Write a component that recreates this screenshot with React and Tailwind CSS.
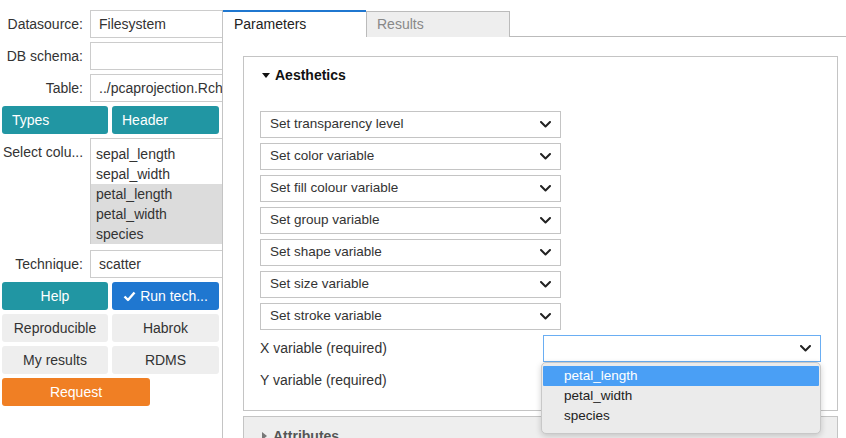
import React from 'react';

const font = { fontFamily: '"Liberation Sans", Arial, sans-serif' };

const Chevron = ({ className = '' }) => (
    <svg width="11" height="7" viewBox="0 0 11 7" className={className}>
        <polyline points="1,1 5.5,5.5 10,1" fill="none" stroke="#222" strokeWidth="2" strokeLinecap="round" strokeLinejoin="round" />
    </svg>
);

const Field = ({ label, value, className = '' }) => (
    <div className={`flex items-center h-[28px] ${className}`}>
        <div className="w-[82px] shrink-0 text-right pr-px">{label}</div>
        <div className="ml-[6px] h-[28px] w-[140px] shrink-0 border border-[#cccccc] bg-white pl-[8px] flex items-center whitespace-nowrap">{value}</div>
    </div>
);

const Btn = ({ children, className = '' }) => (
    <button className={`h-[28px] rounded-[3px] flex items-center justify-center ${className}`}>{children}</button>
);

const Select = ({ label }) => (
    <div className="h-[27px] w-[301px] border border-[#c4c4c4] bg-white flex items-center justify-between pl-[9px] pr-[9px] text-[13.5px]">
        <span>{label}</span>
        <Chevron />
    </div>
);

const aesthetics = [
    'Set transparency level',
    'Set color variable',
    'Set fill colour variable',
    'Set group variable',
    'Set shape variable',
    'Set size variable',
    'Set stroke variable',
];

export default function App() {
    return (
        <div className="flex h-[438px] w-[846px] overflow-hidden bg-white text-[14px] text-[#333]" style={font}>
            {/* left control panel */}
            <aside className="w-[222px] shrink-0 overflow-hidden pt-[10px] pl-[2px] flex flex-col gap-[4px]">
                <Field label="Datasource:" value="Filesystem" />
                <Field label="DB schema:" value="" />
                <Field label="Table:" value="../pcaprojection.Rchunk" />
                <div className="flex gap-[4px] text-white">
                    <Btn className="w-[106px] bg-[#2196a3] !justify-start pl-[10px]">Types</Btn>
                    <Btn className="w-[107px] bg-[#2196a3] !justify-start pl-[10px]">Header</Btn>
                </div>
                <div className="flex">
                    <div className="w-[82px] shrink-0 pl-px pt-[4px] leading-[20px]">Select colu...</div>
                    <div className="ml-[6px] h-[106px] w-[140px] shrink-0 border border-[#cccccc] pt-[5px] leading-[20px]">
                        <div className="pl-[5px]">sepal_length</div>
                        <div className="pl-[5px]">sepal_width</div>
                        <div className="pl-[5px] bg-[#dcdcdc]">petal_length</div>
                        <div className="pl-[5px] bg-[#dcdcdc]">petal_width</div>
                        <div className="pl-[5px] bg-[#dcdcdc]">species</div>
                    </div>
                </div>
                <Field label="Technique:" value="scatter" className="mt-[2px]" />
                <div className="flex gap-[4px] text-white">
                    <Btn className="w-[106px] bg-[#2196a3]">Help</Btn>
                    <Btn className="w-[107px] bg-[#1f77d0] gap-[4px]">
                        <svg width="13" height="11" viewBox="0 0 13 11">
                            <polyline points="1.5,5.5 5,9 11.5,1.5" fill="none" stroke="white" strokeWidth="2.4" strokeLinejoin="round" />
                        </svg>
                        Run tech...
                    </Btn>
                </div>
                <div className="flex gap-[4px]">
                    <Btn className="w-[106px] bg-[#eeeeee]">Reproducible</Btn>
                    <Btn className="w-[107px] bg-[#eeeeee]">Habrok</Btn>
                </div>
                <div className="flex gap-[4px]">
                    <Btn className="w-[106px] bg-[#eeeeee]">My results</Btn>
                    <Btn className="w-[107px] bg-[#eeeeee]">RDMS</Btn>
                </div>
                <Btn className="w-[148px] bg-[#f07f24] text-white">Request</Btn>
            </aside>

            {/* main tab area */}
            <main className="flex-1 pt-[10px] flex flex-col min-w-0">
                <div className="flex-1 border-l border-[#c4c4c4] flex flex-col">
                    <div className="flex items-end">
                        <div className="h-[27px] w-[143px] border-t-2 border-[#1f77d0] pl-[11px] flex items-center text-[#222]">Parameters</div>
                        <div className="h-[26px] w-[144px] border border-b-0 border-[#bbbbbb] bg-[#eeeeee] pl-[10px] flex items-center text-[#888]">Results</div>
                        <div className="flex-1 border-b border-[#bbbbbb]" />
                    </div>
                    <div className="pl-[20px] pr-[8px] pt-[19px] flex flex-col gap-[5px]">
                        <div className="relative h-[355px] border border-[#c4c4c4] pl-[16px] pr-[16px] pt-[9px]">
                            <div className="flex items-center gap-[5px] font-bold text-[#111] h-[18px] pl-[2px]">
                                <svg width="8" height="5" viewBox="0 0 8 5"><polygon points="0,0 8,0 4,5" fill="#111" /></svg>
                                Aesthetics
                            </div>
                            <div className="mt-[27px] flex flex-col gap-[5px]">
                                {aesthetics.map((a) => <Select key={a} label={a} />)}
                                <div className="flex items-center h-[27px]">
                                    <div className="w-[283px] shrink-0">X variable (required)</div>
                                    <div className="h-[27px] w-[278px] border border-[#6aaef3] bg-white flex items-center justify-end pr-[9px]">
                                        <Chevron />
                                    </div>
                                </div>
                                <div className="flex items-center h-[27px]">
                                    <div>Y variable (required)</div>
                                </div>
                            </div>
                            {/* open dropdown */}
                            <div className="absolute left-[297px] top-[305px] w-[280px] h-[72px] rounded-[5px] border border-[#c8c8c8] bg-[#ebebeb] shadow-[0_2px_6px_rgba(0,0,0,0.18)] px-[1px] pt-[3px] text-[13.5px] leading-[20px] text-[#222] z-10">
                                <div className="bg-[#4a9ff5] text-white pl-[21px] rounded-[1px]">petal_length</div>
                                <div className="pl-[21px]">petal_width</div>
                                <div className="pl-[21px]">species</div>
                            </div>
                        </div>
                        <div className="h-[40px] border border-[#c4c4c4] bg-[#eeeeee] pl-[18px] pt-[9px] flex items-start gap-[6px] font-bold text-[#555]">
                            <svg width="5" height="8" viewBox="0 0 5 8" className="mt-[6px]"><polygon points="0,0 5,4 0,8" fill="#777" /></svg>
                            Attributes
                        </div>
                    </div>
                </div>
            </main>
        </div>
    );
}
